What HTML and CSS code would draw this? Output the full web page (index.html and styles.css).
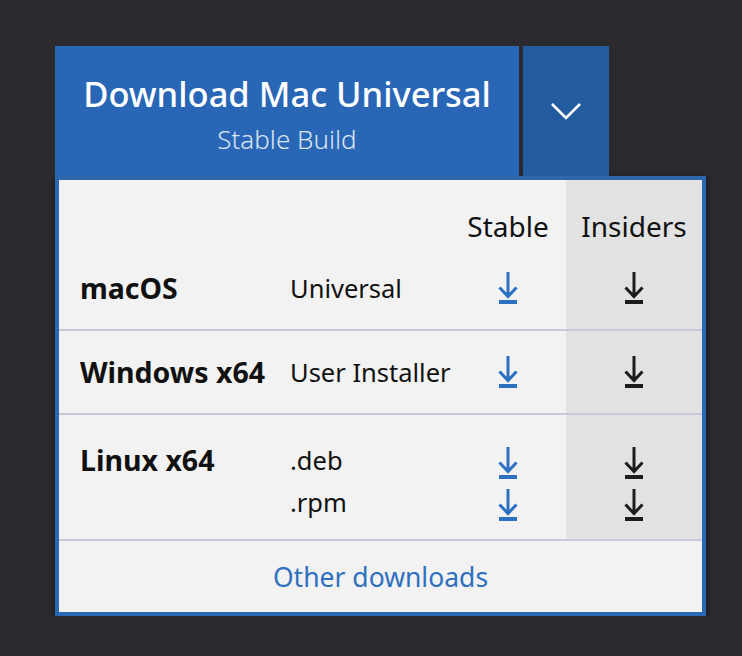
FILE: index.html
```html
<!DOCTYPE html>
<html lang="en">
<head>
<meta charset="utf-8">
<title>Download</title>
<link rel="stylesheet" href="styles.css">
</head>
<body>
<div class="wrap">
  <div class="btn-row">
    <a class="main-btn" href="#">
      <span class="main-title">Download Mac Universal</span>
      <span class="main-sub">Stable Build</span>
    </a>
    <a class="drop-btn" href="#" aria-label="More downloads">
      <svg class="chev" width="32" height="18" viewBox="0 0 32 18"><polyline points="2,2 16,16 30,2" fill="none" stroke="#fff" stroke-width="2.6"/></svg>
    </a>
  </div>
  <div class="panel">
    <div class="row head">
      <div class="c1"></div>
      <div class="c2"></div>
      <div class="c3">Stable</div>
      <div class="c4">Insiders</div>
    </div>
    <div class="row">
      <div class="c1 os">macOS</div>
      <div class="c2">Universal</div>
      <div class="c3"><svg class="dl blue" viewBox="0 0 20 32"><path d="M10 0V25M1.5 15.5L10 24.5L18.5 15.5"/><rect x="1" y="28" width="18" height="4"/></svg></div>
      <div class="c4"><svg class="dl dark" viewBox="0 0 20 32"><path d="M10 0V25M1.5 15.5L10 24.5L18.5 15.5"/><rect x="1" y="28" width="18" height="4"/></svg></div>
    </div>
    <div class="row">
      <div class="c1 os">Windows x64</div>
      <div class="c2">User Installer</div>
      <div class="c3"><svg class="dl blue" viewBox="0 0 20 32"><path d="M10 0V25M1.5 15.5L10 24.5L18.5 15.5"/><rect x="1" y="28" width="18" height="4"/></svg></div>
      <div class="c4"><svg class="dl dark" viewBox="0 0 20 32"><path d="M10 0V25M1.5 15.5L10 24.5L18.5 15.5"/><rect x="1" y="28" width="18" height="4"/></svg></div>
    </div>
    <div class="row linux">
      <div class="c1 os"><div class="line">Linux x64</div></div>
      <div class="c2"><div class="line">.deb</div><div class="line">.rpm</div></div>
      <div class="c3">
        <div class="line"><svg class="dl blue" viewBox="0 0 20 32"><path d="M10 0V25M1.5 15.5L10 24.5L18.5 15.5"/><rect x="1" y="28" width="18" height="4"/></svg></div>
        <div class="line"><svg class="dl blue" viewBox="0 0 20 32"><path d="M10 0V25M1.5 15.5L10 24.5L18.5 15.5"/><rect x="1" y="28" width="18" height="4"/></svg></div>
      </div>
      <div class="c4">
        <div class="line"><svg class="dl dark" viewBox="0 0 20 32"><path d="M10 0V25M1.5 15.5L10 24.5L18.5 15.5"/><rect x="1" y="28" width="18" height="4"/></svg></div>
        <div class="line"><svg class="dl dark" viewBox="0 0 20 32"><path d="M10 0V25M1.5 15.5L10 24.5L18.5 15.5"/><rect x="1" y="28" width="18" height="4"/></svg></div>
      </div>
    </div>
    <div class="foot"><a href="#" class="other">Other downloads</a></div>
  </div>
</div>
</body>
</html>
```
FILE: styles.css
```css
html, body {
  margin: 0;
  padding: 0;
  background: #2b2a2f;
}
body {
  font-family: "Noto Sans", "Open Sans", sans-serif;
  color: #111;
}
.wrap {
  padding: 46px 0 0 55px;
  width: 651px;
}
.btn-row {
  display: flex;
  gap: 4px;
  height: 130px;
}
.main-btn {
  width: 464px;
  background: #2967b6;
  color: #fff;
  text-decoration: none;
  display: flex;
  flex-direction: column;
  align-items: center;
  padding-top: 25px;
  box-sizing: border-box;
}
.main-title {
  font-size: 34.5px;
  font-weight: 500;
  line-height: 46px;
}
.main-sub {
  margin-top: 7px;
  font-size: 26px;
  font-weight: 300;
  line-height: 30px;
  color: #d9e3f2;
}
.drop-btn {
  width: 86px;
  background: #235b9f;
  display: flex;
  align-items: center;
  justify-content: center;
}
.panel {
  border: 4px solid #2a67b5;
  border-top-color: #2d66ad;
  background: #f2f2f2;
  box-shadow: 0 3px 8px rgba(0,0,0,0.55);
}
.row {
  display: grid;
  grid-template-columns: 231px 160px 116px 136px;
  height: 82px;
  border-bottom: 2px solid #cac8d6;
  font-size: 25.5px;
  line-height: 32px;
  white-space: nowrap;
}
.row > div {
  display: flex;
  align-items: center;
}
.row .c1 { padding-left: 21px; }
.row .c3, .row .c4 { justify-content: center; }
.row .c4 { background: #e2e2e2; }
.os {
  font-weight: 700;
  font-size: 28.5px;
}
.head {
  height: 67px;
  border-bottom: none;
  font-size: 28px;
}
.head > div {
  align-items: flex-end;
  padding-bottom: 5px;
}
.linux {
  height: 124px;
}
.linux > div {
  flex-direction: column;
  align-items: flex-start;
  justify-content: flex-start;
  padding-top: 24px;
  box-sizing: border-box;
}
.linux > .c3, .linux > .c4 {
  align-items: center;
  padding-top: 14px;
}
.line {
  height: 42px;
  display: flex;
  align-items: center;
}
.dl {
  display: block;
  width: 20px;
  height: 32px;
}
.dl path {
  fill: none;
  stroke-width: 3;
}
.blue path { stroke: #2c70c1; }
.blue rect { fill: #2c70c1; }
.dark path { stroke: #1c1c1c; }
.dark rect { fill: #1c1c1c; }
.foot {
  height: 71px;
  display: flex;
  align-items: center;
  justify-content: center;
}
.other {
  color: #2e70bf;
  text-decoration: none;
  font-size: 26.5px;
}
```
